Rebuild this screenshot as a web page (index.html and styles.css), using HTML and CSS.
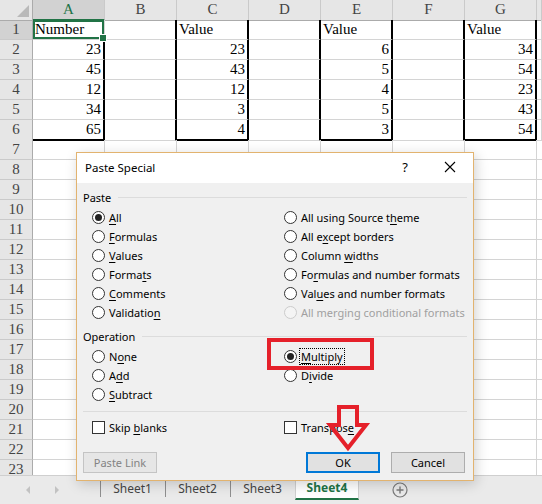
FILE: index.html
```html
<!DOCTYPE html>
<html>
<head>
<meta charset="utf-8">
<title>Paste Special</title>
<link rel="stylesheet" href="styles.css">
</head>
<body>
<div class="sheet">
  <div class="row">
    <div class="corner"></div>
    <div class="ch sel">A</div><div class="ch">B</div><div class="ch">C</div><div class="ch">D</div><div class="ch">E</div><div class="ch">F</div><div class="ch">G</div><div class="ch"></div>
  </div>
  <div class="row">
    <div class="rh sel">1</div>
    <div class="c txt active">Number</div><div class="c tr"></div><div class="c txt tr">Value</div><div class="c tr"></div><div class="c txt tr">Value</div><div class="c tr"></div><div class="c txt tr">Value</div><div class="c"></div>
  </div>
  <div class="row">
    <div class="rh">2</div>
    <div class="c tr">23</div><div class="c tr"></div><div class="c tr">23</div><div class="c tr"></div><div class="c tr">6</div><div class="c tr"></div><div class="c tr">34</div><div class="c"></div>
  </div>
  <div class="row">
    <div class="rh">3</div>
    <div class="c tr">45</div><div class="c tr"></div><div class="c tr">43</div><div class="c tr"></div><div class="c tr">5</div><div class="c tr"></div><div class="c tr">54</div><div class="c"></div>
  </div>
  <div class="row">
    <div class="rh">4</div>
    <div class="c tr">12</div><div class="c tr"></div><div class="c tr">12</div><div class="c tr"></div><div class="c tr">4</div><div class="c tr"></div><div class="c tr">23</div><div class="c"></div>
  </div>
  <div class="row">
    <div class="rh">5</div>
    <div class="c tr">34</div><div class="c tr"></div><div class="c tr">3</div><div class="c tr"></div><div class="c tr">5</div><div class="c tr"></div><div class="c tr">43</div><div class="c"></div>
  </div>
  <div class="row">
    <div class="rh">6</div>
    <div class="c tr tb">65</div><div class="c tr"></div><div class="c tr tb">4</div><div class="c tr"></div><div class="c tr tb">3</div><div class="c tr"></div><div class="c tr tb">54</div><div class="c"></div>
  </div>
  <div class="row"><div class="rh">7</div><div class="blank"></div></div>
  <div class="row"><div class="rh">8</div><div class="blank"></div></div>
  <div class="row"><div class="rh">9</div><div class="blank"></div></div>
  <div class="row"><div class="rh">10</div><div class="blank"></div></div>
  <div class="row"><div class="rh">11</div><div class="blank"></div></div>
  <div class="row"><div class="rh">12</div><div class="blank"></div></div>
  <div class="row"><div class="rh">13</div><div class="blank"></div></div>
  <div class="row"><div class="rh">14</div><div class="blank"></div></div>
  <div class="row"><div class="rh">15</div><div class="blank"></div></div>
  <div class="row"><div class="rh">16</div><div class="blank"></div></div>
  <div class="row"><div class="rh">17</div><div class="blank"></div></div>
  <div class="row"><div class="rh">18</div><div class="blank"></div></div>
  <div class="row"><div class="rh">19</div><div class="blank"></div></div>
  <div class="row"><div class="rh">20</div><div class="blank"></div></div>
  <div class="row"><div class="rh">21</div><div class="blank"></div></div>
  <div class="row"><div class="rh">22</div><div class="blank"></div></div>
  <div class="row"><div class="rh">23</div><div class="blank"></div></div>
</div>

<div class="tabs">
  <div class="nav"><span class="tri left"></span><span class="tri right"></span></div>
  <div class="tab">Sheet1</div>
  <div class="tab">Sheet2</div>
  <div class="tab">Sheet3</div>
  <div class="tab on">Sheet4</div>
  <div class="add">
    <svg width="16" height="16" viewBox="0 0 16 16"><circle cx="8" cy="8" r="7" fill="none" stroke="#7a7a7a" stroke-width="1.2"/><path d="M8 4.5v7M4.5 8h7" stroke="#7a7a7a" stroke-width="1.4"/></svg>
  </div>
</div>

<div class="dialog">
  <div class="titlebar">
    <span class="title">Paste Special</span>
    <span class="help">?</span>
    <span class="close"><svg width="12" height="12" viewBox="0 0 12 12"><path d="M1 1L11 11M11 1L1 11" stroke="#000" stroke-width="1.1"/></svg></span>
  </div>
  <div class="dbody">
    <div class="grp">Paste</div>
    <div class="opts six">
      <div class="opt"><span class="radio on"></span><span><u>A</u>ll</span></div>
      <div class="opt"><span class="radio"></span><span><u>F</u>ormulas</span></div>
      <div class="opt"><span class="radio"></span><span><u>V</u>alues</span></div>
      <div class="opt"><span class="radio"></span><span>Forma<u>t</u>s</span></div>
      <div class="opt"><span class="radio"></span><span><u>C</u>omments</span></div>
      <div class="opt"><span class="radio"></span><span>Validatio<u>n</u></span></div>
      <div class="opt"><span class="radio"></span><span>All using Source t<u>h</u>eme</span></div>
      <div class="opt"><span class="radio"></span><span>All e<u>x</u>cept borders</span></div>
      <div class="opt"><span class="radio"></span><span>Column <u>w</u>idths</span></div>
      <div class="opt"><span class="radio"></span><span>Fo<u>r</u>mulas and number formats</span></div>
      <div class="opt"><span class="radio"></span><span>Val<u>u</u>es and number formats</span></div>
      <div class="opt off"><span class="radio"></span><span>All merging conditional formats</span></div>
    </div>
    <div class="grp op">Operation</div>
    <div class="opts three">
      <div class="opt"><span class="radio"></span><span>N<u>o</u>ne</span></div>
      <div class="opt"><span class="radio"></span><span>A<u>d</u>d</span></div>
      <div class="opt"><span class="radio"></span><span><u>S</u>ubtract</span></div>
      <div class="opt"><span class="radio on"></span><span class="focus"><u>M</u>ultiply</span></div>
      <div class="opt"><span class="radio"></span><span>D<u>i</u>vide</span></div>
    </div>
    <div class="sep"></div>
    <div class="opts one">
      <div class="opt"><span class="check"></span><span>Skip <u>b</u>lanks</span></div>
      <div class="opt"><span class="check"></span><span>Transpos<u>e</u></span></div>
    </div>
    <div class="buttons">
      <button class="btn dis">Paste Link</button>
      <div class="right">
        <button class="btn ok">OK</button>
        <button class="btn">Cancel</button>
      </div>
    </div>
  </div>
</div>

<svg class="marks" width="542" height="504" viewBox="0 0 542 504">
  <rect x="269" y="340" width="103" height="28" fill="none" stroke="#e5202a" stroke-width="4"/>
  <path d="M339 407H357V425H366L348 448L330 425H339Z" fill="none" stroke="#e5202a" stroke-width="4" stroke-linejoin="miter"/>
</svg>
</body>
</html>
```

FILE: styles.css
```css
* { box-sizing: border-box; margin: 0; padding: 0; }

body {
  width: 542px;
  height: 504px;
  overflow: hidden;
  position: relative;
  background: #fff;
  font-family: "Liberation Serif", "Times New Roman", serif;
}

/* ---------- worksheet ---------- */
.sheet {
  height: 475px;
  overflow: hidden;
}

.row {
  display: grid;
  grid-template-columns: 33px repeat(7, 72px) 1fr;
  height: 20px;
}

.corner {
  position: relative;
  background: #e6e6e6;
  border-right: 1px solid #ababab;
  border-bottom: 1px solid #ababab;
}
.corner::after {
  content: "";
  position: absolute;
  right: 3px;
  bottom: 3px;
  border-style: solid;
  border-width: 0 0 12px 12px;
  border-color: transparent transparent #b9b9b9 transparent;
}

.ch {
  background: #e6e6e6;
  border-right: 1px solid #cacaca;
  border-bottom: 1px solid #ababab;
  text-align: center;
  font-size: 15px;
  line-height: 19px;
  color: #444;
}
.ch.sel {
  background: #d2d2d2;
  color: #217346;
  border-bottom: 2px solid #217346;
}

.rh {
  background: #e6e6e6;
  border-right: 1px solid #ababab;
  border-bottom: 1px solid #cacaca;
  text-align: center;
  font-size: 15px;
  line-height: 19px;
  color: #444;
}
.rh.sel { background: #d2d2d2; }

.c {
  border-right: 1px solid #d4d4d4;
  border-bottom: 1px solid #d4d4d4;
  font-size: 15px;
  line-height: 19px;
  padding: 0 2px;
  text-align: right;
  color: #000;
  white-space: nowrap;
}
.c.txt { text-align: left; }
.c.tr { border-right: 2px solid #000; }
.c.tb { border-bottom: 2px solid #000; }

.c.active {
  position: relative;
  box-shadow: inset 0 0 0 2px #217346;
}
.c.active::after {
  content: "";
  position: absolute;
  right: -3px;
  bottom: -3px;
  width: 6px;
  height: 6px;
  background: #217346;
  border: 1px solid #fff;
  z-index: 2;
}

.blank {
  grid-column: 2 / -1;
  border-bottom: 1px solid #d4d4d4;
  background: repeating-linear-gradient(to right, transparent 0 71px, #d4d4d4 71px 72px);
}

/* ---------- sheet tabs ---------- */
.tabs {
  height: 29px;
  background: #eaeaea;
  border-top: 1px solid #cfcfcf;
  display: flex;
  align-items: flex-start;
  font-family: "Noto Sans", "Liberation Sans", sans-serif;
  font-size: 12px;
  color: #444;
}
.nav {
  width: 100px;
  height: 28px;
  display: flex;
  align-items: center;
  padding-left: 26px;
  gap: 25px;
}
.tri {
  width: 0;
  height: 0;
  border-style: solid;
}
.tri.left { border-width: 4px 4px 4px 0; border-color: transparent #c2c2c2 transparent transparent; }
.tri.right { border-width: 4px 0 4px 4px; border-color: transparent transparent transparent #c2c2c2; }

.tab {
  width: 65px;
  height: 23px;
  margin-top: 1px;
  display: flex;
  align-items: center;
  justify-content: center;
  background: linear-gradient(#8f8f8f, #8f8f8f) left center / 1px 16px no-repeat;
}
.tab.on {
  width: 64px;
  background: #fff;
  color: #217346;
  font-weight: bold;
  border-left: 1px solid #d0d0d0;
  border-right: 1px solid #d0d0d0;
  border-bottom: 2px solid #217346;
}
.add {
  margin-left: 33px;
  height: 28px;
  display: flex;
  align-items: center;
}
.add svg { display: block; }

/* ---------- dialog ---------- */
.dialog {
  position: absolute;
  left: 76px;
  top: 152px;
  width: 398px;
  height: 329px;
  background: #f0f0f0;
  border: 1px solid #e2b36f;
  box-shadow: 2px 3px 12px rgba(0, 0, 0, 0.18);
  font-family: "Noto Sans", "Liberation Sans", sans-serif;
  font-size: 11px;
  color: #000;
}

.titlebar {
  height: 30px;
  background: #fff;
  display: flex;
  align-items: center;
  padding-left: 8px;
}
.title { font-size: 11.5px; flex: 1; margin-top: -2px; }
.help { font-size: 13px; width: 14px; text-align: center; margin-right: 32px; margin-top: -2px; }
.close { width: 12px; height: 12px; margin-right: 17px; margin-top: -2px; }
.close svg { display: block; }

.dbody {
  padding: 6px 6px 0 6px;
}

.grp {
  display: flex;
  align-items: center;
  height: 16px;
}
.grp::after {
  content: "";
  flex: 1;
  height: 1px;
  background: #dcdcdc;
  margin-left: 7px;
}
.grp.op { margin-top: 6px; }

.opts {
  display: grid;
  grid-template-columns: 192px 1fr;
  grid-auto-flow: column;
  grid-auto-rows: 19px;
  padding-left: 9px;
  margin-top: 3px;
}
.opts.six { grid-template-rows: repeat(6, 19px); }
.opts.three { grid-template-rows: repeat(3, 19px); }
.opts.one { grid-template-rows: 19px; margin-top: 6px; }

.opt {
  display: flex;
  align-items: center;
  gap: 4px;
  white-space: nowrap;
}
.opt u { text-underline-offset: 2px; }

.radio {
  width: 13px;
  height: 13px;
  border-radius: 50%;
  border: 1px solid #333;
  background: #fff;
  display: flex;
  align-items: center;
  justify-content: center;
  flex: none;
}
.radio.on::after {
  content: "";
  width: 7px;
  height: 7px;
  border-radius: 50%;
  background: #222;
}
.opt.off { color: #a0a0a0; }
.opt.off .radio { border-color: #cccccc; background: #f4f4f4; }

.check {
  width: 13px;
  height: 13px;
  border: 1px solid #333;
  background: #fff;
  flex: none;
}

.focus {
  outline: 1px dotted #000;
  padding: 0 1px;
  margin-left: -1px;
}

.sep {
  height: 1px;
  background: #dcdcdc;
  margin-top: 7px;
}

.buttons {
  display: flex;
  justify-content: space-between;
  margin-top: 15px;
  padding-right: 2px;
}
.right { display: flex; gap: 11px; }

.btn {
  width: 74px;
  height: 21px;
  border: 1px solid #adadad;
  background: #e1e1e1;
  font-family: "Noto Sans", "Liberation Sans", sans-serif;
  font-size: 11px;
  color: #000;
}
.btn.dis {
  color: #838383;
  border-color: #c4c4c4;
  background: #e6e6e6;
}
.btn.ok {
  border: 2px solid #0078d7;
}

/* annotation marks drawn over the screenshot */
.marks {
  position: absolute;
  left: 0;
  top: 0;
  pointer-events: none;
}
```
